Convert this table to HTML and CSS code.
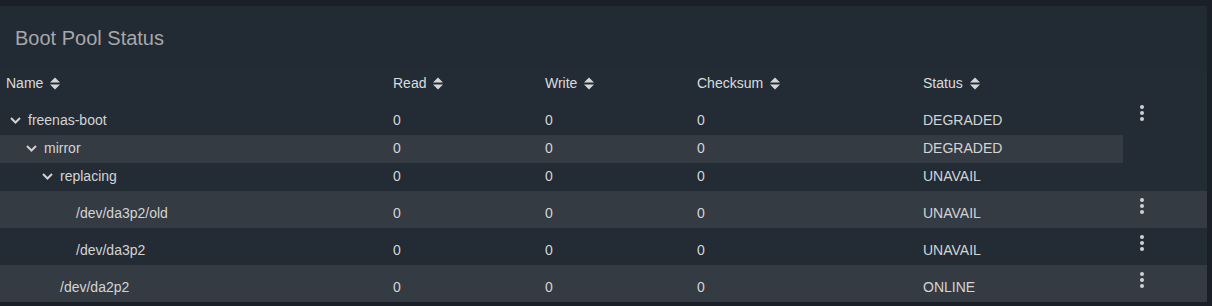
FILE: index.html
```html
<!DOCTYPE html>
<html>
<head>
<meta charset="utf-8">
<title>Boot Pool Status</title>
<link rel="stylesheet" href="styles.css">
</head>
<body>
<div class="card">
  <h2 class="title">Boot Pool Status</h2>
  <div class="table">
    <div class="head">
      <div class="hcell">Name <svg class="sort" viewBox="0 0 10 13" width="10" height="13"><path d="M0 5.6 L5 0.6 L10 5.6 Z M0 7.4 L5 12.4 L10 7.4 Z"/></svg></div>
      <div class="hcell">Read <svg class="sort" viewBox="0 0 10 13" width="10" height="13"><path d="M0 5.6 L5 0.6 L10 5.6 Z M0 7.4 L5 12.4 L10 7.4 Z"/></svg></div>
      <div class="hcell">Write <svg class="sort" viewBox="0 0 10 13" width="10" height="13"><path d="M0 5.6 L5 0.6 L10 5.6 Z M0 7.4 L5 12.4 L10 7.4 Z"/></svg></div>
      <div class="hcell">Checksum <svg class="sort" viewBox="0 0 10 13" width="10" height="13"><path d="M0 5.6 L5 0.6 L10 5.6 Z M0 7.4 L5 12.4 L10 7.4 Z"/></svg></div>
      <div class="hcell">Status <svg class="sort" viewBox="0 0 10 13" width="10" height="13"><path d="M0 5.6 L5 0.6 L10 5.6 Z M0 7.4 L5 12.4 L10 7.4 Z"/></svg></div>
      <div class="hcell"></div>
    </div>

    <div class="group">
      <div class="group-rows">
        <div class="row5 tall">
          <div class="cell name lvl0"><svg class="chev" viewBox="0 0 11 7" width="11" height="7"><polyline points="1,1 5.5,5.5 10,1"/></svg>freenas-boot</div>
          <div class="cell">0</div><div class="cell">0</div><div class="cell">0</div><div class="cell">DEGRADED</div>
        </div>
        <div class="row5 short stripe">
          <div class="cell name lvl1"><svg class="chev" viewBox="0 0 11 7" width="11" height="7"><polyline points="1,1 5.5,5.5 10,1"/></svg>mirror</div>
          <div class="cell">0</div><div class="cell">0</div><div class="cell">0</div><div class="cell">DEGRADED</div>
        </div>
        <div class="row5 short">
          <div class="cell name lvl2"><svg class="chev" viewBox="0 0 11 7" width="11" height="7"><polyline points="1,1 5.5,5.5 10,1"/></svg>replacing</div>
          <div class="cell">0</div><div class="cell">0</div><div class="cell">0</div><div class="cell">UNAVAIL</div>
        </div>
      </div>
      <div class="actions"><svg class="dots" viewBox="0 0 4 16" width="4" height="16"><circle cx="2" cy="2" r="2"/><circle cx="2" cy="8" r="2"/><circle cx="2" cy="14" r="2"/></svg></div>
    </div>

    <div class="row stripe">
      <div class="cell name leaf3">/dev/da3p2/old</div>
      <div class="cell">0</div><div class="cell">0</div><div class="cell">0</div><div class="cell">UNAVAIL</div>
      <div class="actions"><svg class="dots" viewBox="0 0 4 16" width="4" height="16"><circle cx="2" cy="2" r="2"/><circle cx="2" cy="8" r="2"/><circle cx="2" cy="14" r="2"/></svg></div>
    </div>
    <div class="row">
      <div class="cell name leaf3">/dev/da3p2</div>
      <div class="cell">0</div><div class="cell">0</div><div class="cell">0</div><div class="cell">UNAVAIL</div>
      <div class="actions"><svg class="dots" viewBox="0 0 4 16" width="4" height="16"><circle cx="2" cy="2" r="2"/><circle cx="2" cy="8" r="2"/><circle cx="2" cy="14" r="2"/></svg></div>
    </div>
    <div class="row stripe">
      <div class="cell name leaf2">/dev/da2p2</div>
      <div class="cell">0</div><div class="cell">0</div><div class="cell">0</div><div class="cell">ONLINE</div>
      <div class="actions"><svg class="dots" viewBox="0 0 4 16" width="4" height="16"><circle cx="2" cy="2" r="2"/><circle cx="2" cy="8" r="2"/><circle cx="2" cy="14" r="2"/></svg></div>
    </div>
  </div>
</div>
</body>
</html>
```

FILE: styles.css
```css
html, body {
  margin: 0;
  padding: 0;
  background: #1b2028;
  font-family: "Liberation Sans", Arial, sans-serif;
  font-size: 14px;
  color: #d4d4d4;
}

.card {
  margin-top: 6px;
  width: 1207px;
  background: #222a33;
}

.title {
  margin: 0;
  padding: 20px 0 20px 15px;
  font-size: 20px;
  line-height: 24px;
  font-weight: normal;
  color: #a6a8aa;
}

.table {
  background: #232c35;
}

.head {
  display: grid;
  grid-template-columns: 387px 152px 152px 226px 206px 84px;
  height: 28px;
  box-sizing: border-box;
  padding-top: 5px;
}

.hcell {
  padding-left: 6px;
  line-height: 16px;
  color: #dcdcdc;
  display: flex;
  align-items: center;
  height: 16px;
  white-space: nowrap;
}

.sort {
  margin-left: 7px;
  fill: #d6d6d6;
}

.group {
  display: grid;
  grid-template-columns: 1123px 84px;
}

.row5 {
  display: grid;
  grid-template-columns: 387px 152px 152px 226px 206px;
  box-sizing: border-box;
}

.row {
  display: grid;
  grid-template-columns: 387px 152px 152px 226px 206px 84px;
  height: 37px;
  box-sizing: border-box;
}

.tall {
  height: 37px;
  padding-top: 14px;
}

.short {
  height: 28px;
  padding-top: 5px;
}

.row .cell {
  padding-top: 14px;
}

.stripe {
  background: #353b42;
}

.cell {
  padding-left: 6px;
  line-height: 16px;
  white-space: nowrap;
}

.name {
  display: flex;
  align-items: center;
  height: 16px;
}

.chev {
  fill: none;
  stroke: #d0d0d0;
  stroke-width: 2;
  margin-right: 7px;
  flex: none;
}

.lvl0 { padding-left: 10px; }
.lvl1 { padding-left: 26px; }
.lvl2 { padding-left: 42px; }
.leaf2 { padding-left: 60px; }
.leaf3 { padding-left: 76px; }

.actions {
  padding-left: 17px;
  padding-top: 7px;
}

.dots {
  display: block;
  fill: #d0d0d0;
}
```
